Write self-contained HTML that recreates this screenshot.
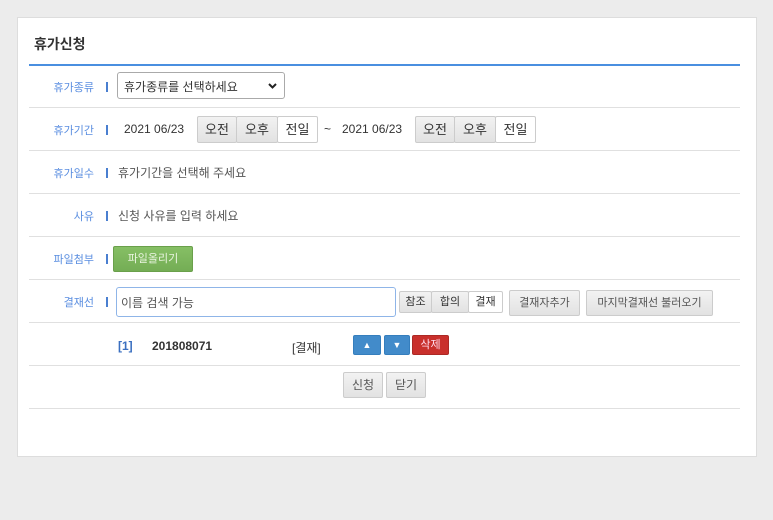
<!DOCTYPE html><html><head><meta charset="utf-8"><style>
body{margin:0;width:773px;height:520px;background:#ececec;font-family:"Liberation Sans","Noto Sans CJK KR",sans-serif;position:relative;overflow:hidden}
.panel{position:absolute;left:17px;top:17px;width:738px;height:438px;background:#fff;border:1px solid #ddd}
.a{position:absolute}
.title{left:34px;top:34px;font-size:14px;font-weight:bold;color:#333}
.blue{left:29px;top:64px;width:711px;height:2px;background:#4a8fe0}
.sep{left:29px;width:711px;height:1px;background:#e0e0e0}
.lbl{width:64px;text-align:right;left:30px;font-size:11px;color:#5a8ee0}
.bar{left:106px;width:2px;height:10px;background:#4a7fd0}
.t{font-size:12px;color:#333;white-space:nowrap}
.btn{border:1px solid #ccc;background:linear-gradient(#f2f2f2,#e2e2e2);font-size:12px;color:#333;text-align:center;box-sizing:border-box;border-radius:2px}
.w{background:#fff}
</style></head><body>
<div class="panel"></div>
<div class="a title">휴가신청</div>
<div class="a blue"></div>
<div class="a sep" style="top:107px"></div><div class="a sep" style="top:150px"></div><div class="a sep" style="top:193px"></div><div class="a sep" style="top:236px"></div><div class="a sep" style="top:279px"></div><div class="a sep" style="top:322px"></div><div class="a sep" style="top:365px"></div><div class="a sep" style="top:408px"></div>

<div class="a lbl" style="top:79px">휴가종류</div><div class="a bar" style="top:82px"></div>
<div class="a t" style="left:117px;top:72px;width:168px;height:27px;border:1px solid #aaa;border-radius:3px;box-sizing:border-box;padding:5px 6px;font-size:12px">휴가종류를 선택하세요<svg style="position:absolute;right:7px;top:10px" width="9" height="6" viewBox="0 0 9 6"><path d="M1 1L4.5 4.5L8 1" stroke="#222" stroke-width="2" fill="none"/></svg></div>

<div class="a lbl" style="top:122px">휴가기간</div><div class="a bar" style="top:125px"></div>
<div class="a t" style="left:124px;top:122px">2021 06/23</div>
<div class="a btn" style="left:197px;top:116px;width:40px;height:27px;line-height:25px;font-size:13px">오전</div>
<div class="a btn" style="left:236px;top:116px;width:42px;height:27px;line-height:25px;font-size:13px">오후</div>
<div class="a btn w" style="left:277px;top:116px;width:41px;height:27px;line-height:25px;font-size:13px">전일</div>
<div class="a t" style="left:324px;top:122px">~</div>
<div class="a t" style="left:342px;top:122px">2021 06/23</div>
<div class="a btn" style="left:415px;top:116px;width:40px;height:27px;line-height:25px;font-size:13px">오전</div>
<div class="a btn" style="left:454px;top:116px;width:42px;height:27px;line-height:25px;font-size:13px">오후</div>
<div class="a btn w" style="left:495px;top:116px;width:41px;height:27px;line-height:25px;font-size:13px">전일</div>

<div class="a lbl" style="top:165px">휴가일수</div><div class="a bar" style="top:168px"></div>
<div class="a t" style="left:118px;top:164px;color:#555">휴가기간을 선택해 주세요</div>
<div class="a lbl" style="top:208px">사유</div><div class="a bar" style="top:211px"></div>
<div class="a t" style="left:118px;top:207px;color:#555">신청 사유를 입력 하세요</div>

<div class="a lbl" style="top:251px">파일첨부</div><div class="a bar" style="top:254px"></div>
<div class="a btn" style="left:113px;top:246px;width:80px;height:26px;line-height:24px;background:linear-gradient(#86bf65,#74ad55);border-color:#6aa04b;color:#eaf5e0;font-size:11px">파일올리기</div>

<div class="a lbl" style="top:294px">결재선</div><div class="a bar" style="top:297px"></div>
<div class="a" style="left:116px;top:287px;width:280px;height:30px;border:1px solid #8fb5e8;border-radius:3px;box-sizing:border-box;padding:6px 4px;font-size:12px;color:#555">이름 검색 가능</div>
<div class="a btn" style="left:399px;top:291px;width:33px;height:22px;line-height:20px;font-size:11px">참조</div>
<div class="a btn" style="left:431px;top:291px;width:38px;height:22px;line-height:20px;font-size:11px">합의</div>
<div class="a btn w" style="left:468px;top:291px;width:35px;height:22px;line-height:20px;font-size:11px">결재</div>
<div class="a btn" style="left:509px;top:290px;width:71px;height:26px;line-height:24px;font-size:11px;color:#555">결재자추가</div>
<div class="a btn" style="left:586px;top:290px;width:127px;height:26px;line-height:24px;font-size:11px;color:#555">마지막결재선 불러오기</div>

<div class="a t" style="left:118px;top:339px;color:#3a6fc0;font-weight:bold">[1]</div>
<div class="a t" style="left:152px;top:339px;font-weight:bold">201808071</div>
<div class="a t" style="left:292px;top:339px">[결재]</div>
<div class="a btn" style="left:353px;top:335px;width:28px;height:20px;line-height:18px;background:#428bca;border-color:#357ebd;color:#fff;font-size:9px">▲</div>
<div class="a btn" style="left:384px;top:335px;width:26px;height:20px;line-height:18px;background:#428bca;border-color:#357ebd;color:#fff;font-size:9px">▼</div>
<div class="a btn" style="left:412px;top:335px;width:37px;height:20px;line-height:18px;background:#c9302c;border-color:#ac2925;color:#fde;font-size:11px">삭제</div>

<div class="a btn" style="left:343px;top:372px;width:40px;height:26px;line-height:24px;color:#555">신청</div>
<div class="a btn" style="left:386px;top:372px;width:40px;height:26px;line-height:24px;color:#555">닫기</div>
</body></html>
